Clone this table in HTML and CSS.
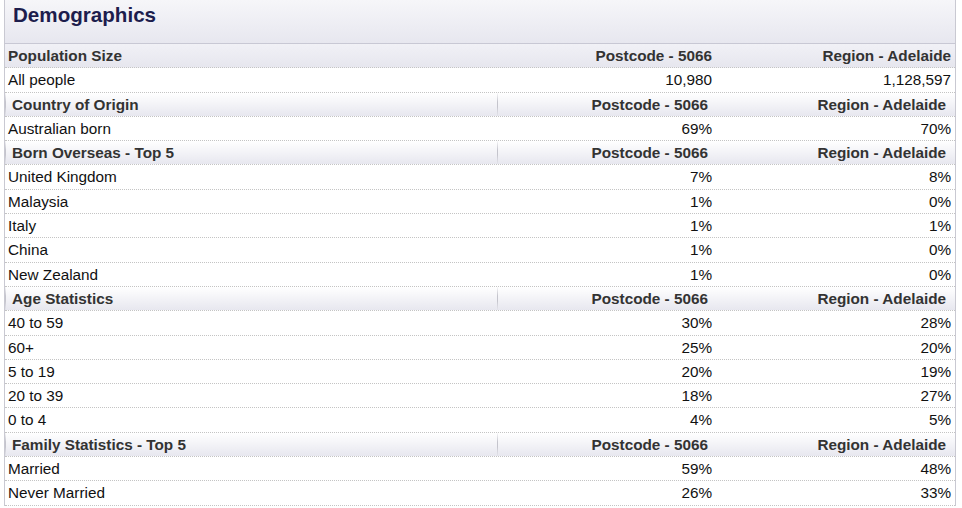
FILE: index.html
```html
<!DOCTYPE html>
<html>
<head>
<meta charset="utf-8">
<link rel="stylesheet" href="styles.css">
</head>
<body>
<div class="panel">
  <div class="title">Demographics</div>
  <div class="grid">
    <div class="row head top"><div class="c1">Population Size</div><div class="c2">Postcode - 5066</div><div class="c3">Region - Adelaide</div></div>
    <div class="row"><div class="c1">All people</div><div class="c2">10,980</div><div class="c3">1,128,597</div></div>

    <div class="row head sec"><div class="c1">Country of Origin</div><div class="c2">Postcode - 5066</div><div class="c3">Region - Adelaide</div></div>
    <div class="row"><div class="c1">Australian born</div><div class="c2">69%</div><div class="c3">70%</div></div>

    <div class="row head sec"><div class="c1">Born Overseas - Top 5</div><div class="c2">Postcode - 5066</div><div class="c3">Region - Adelaide</div></div>
    <div class="row"><div class="c1">United Kingdom</div><div class="c2">7%</div><div class="c3">8%</div></div>
    <div class="row"><div class="c1">Malaysia</div><div class="c2">1%</div><div class="c3">0%</div></div>
    <div class="row"><div class="c1">Italy</div><div class="c2">1%</div><div class="c3">1%</div></div>
    <div class="row"><div class="c1">China</div><div class="c2">1%</div><div class="c3">0%</div></div>
    <div class="row"><div class="c1">New Zealand</div><div class="c2">1%</div><div class="c3">0%</div></div>

    <div class="row head sec"><div class="c1">Age Statistics</div><div class="c2">Postcode - 5066</div><div class="c3">Region - Adelaide</div></div>
    <div class="row"><div class="c1">40 to 59</div><div class="c2">30%</div><div class="c3">28%</div></div>
    <div class="row"><div class="c1">60+</div><div class="c2">25%</div><div class="c3">20%</div></div>
    <div class="row"><div class="c1">5 to 19</div><div class="c2">20%</div><div class="c3">19%</div></div>
    <div class="row"><div class="c1">20 to 39</div><div class="c2">18%</div><div class="c3">27%</div></div>
    <div class="row"><div class="c1">0 to 4</div><div class="c2">4%</div><div class="c3">5%</div></div>

    <div class="row head sec"><div class="c1">Family Statistics - Top 5</div><div class="c2">Postcode - 5066</div><div class="c3">Region - Adelaide</div></div>
    <div class="row"><div class="c1">Married</div><div class="c2">59%</div><div class="c3">48%</div></div>
    <div class="row"><div class="c1">Never Married</div><div class="c2">26%</div><div class="c3">33%</div></div>
  </div>
</div>
</body>
</html>
```

FILE: styles.css
```css
html, body {
  margin: 0;
  padding: 0;
  background: #ffffff;
}
body {
  font-family: "Liberation Sans", Arial, sans-serif;
  color: #111;
}
.panel {
  margin-left: 4px;
  width: 952px;
  box-sizing: border-box;
  border-left: 1px solid #c9c9d2;
  border-right: 1px solid #c9c9d2;
}
.title {
  height: 44px;
  box-sizing: border-box;
  padding: 3px 0 0 8px;
  font-size: 20.6px;
  line-height: 24px;
  font-weight: bold;
  color: #1d1d4d;
  background: linear-gradient(#f6f6f9, #e7e7ef);
  border-bottom: 1px solid #c8c8d4;
}
.grid {
  display: flex;
  flex-direction: column;
}
.row {
  display: grid;
  grid-template-columns: 493px 218px 239px;
  height: 24.3px;
  box-sizing: border-box;
  border-bottom: 1px dotted #c4c4c4;
  font-size: 15.3px;
  line-height: 23px;
  background: #ffffff;
}
.c1 {
  padding-left: 3px;
  white-space: nowrap;
}
.c2, .c3 {
  text-align: right;
  padding-right: 4px;
  white-space: nowrap;
}
.head {
  font-weight: bold;
  color: #333;
}
.top {
  background: linear-gradient(#f1f1f6, #e6e6ee);
}
.sec {
  background: linear-gradient(#ffffff, #e7e7ef);
}
.sec .c1 {
  padding-left: 6px;
  border-left: 1px solid #e2e2e8;
  border-right: 1px solid;
  border-image: linear-gradient(rgba(200,200,208,0), #c4c4cc 40%, #c4c4cc 60%, rgba(200,200,208,0)) 1;
  border-left-width: 1px;
}
.sec .c2 {
  padding-right: 8px;
}
.sec .c3 {
  padding-right: 9px;
}
```
